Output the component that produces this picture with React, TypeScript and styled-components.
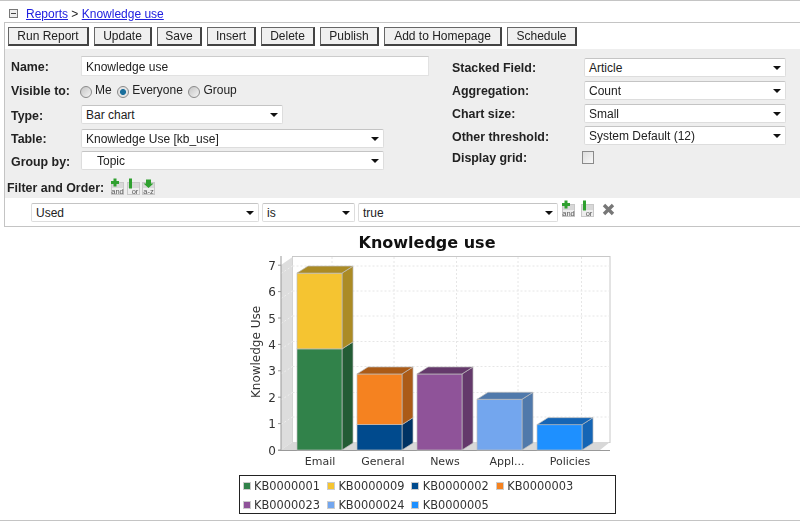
import React from "react";
import styled, { createGlobalStyle } from "styled-components";

const Global = createGlobalStyle`
  html, body { margin: 0; padding: 0; background: #fff; }
  body { font-family: "Liberation Sans", Arial, sans-serif; font-size: 12px; color: #222; }
`;

const Page = styled.div`
  width: 800px;
  height: 521px;
  box-sizing: border-box;
  border-top: 1px solid #c4c4c4;
  border-bottom: 1px solid #c4c4c4;
  overflow: hidden;
  display: flex;
  flex-direction: column;
  filter: blur(0.3px);
`;
const Crumbs = styled.div`
  height: 21px;
  flex: none;
  box-sizing: border-box;
  padding: 4px 0 0 9px;
  display: flex;
  align-items: center;
  gap: 8px;
  font-size: 12px;
  line-height: 14px;
`;
const Collapse = styled.span`
  width: 9px;
  height: 9px;
  box-sizing: border-box;
  border: 1px solid #777;
  background: linear-gradient(#444, #444) center / 5px 1px no-repeat, #eee;
  flex: none;
`;
const CrumbLink = styled.a`
  color: #2020e0;
  text-decoration: underline;
`;
const Panel = styled.div`
  margin-left: 4px;
  height: 205px;
  flex: none;
  box-sizing: border-box;
  border-left: 1px solid #c4c4c4;
  border-top: 1px solid #c4c4c4;
  border-bottom: 1px solid #c4c4c4;
  display: flex;
  flex-direction: column;
`;
const Toolbar = styled.div`
  height: 26px;
  flex: none;
  box-sizing: border-box;
  padding: 4px 0 0 3px;
  display: flex;
  gap: 5px;
`;
const Btn = styled.button<{ $w: number }>`
  width: ${(p) => p.$w}px;
  height: 19px;
  padding: 0;
  box-sizing: border-box;
  border: 1px solid #444;
  border-right-width: 2px;
  border-bottom-width: 2px;
  border-left-color: #666;
  border-top-color: #666;
  background: #f0f0f0;
  color: #222;
  font: 12px "Liberation Sans", Arial, sans-serif;
`;
const Form = styled.div`
  height: 149px;
  flex: none;
  background: #eee;
  box-sizing: border-box;
  display: flex;
  flex-direction: column;
`;
const Columns = styled.div`
  display: flex;
  padding: 5px 0 0 6px;
`;
const Col = styled.div<{ $w: number; $top?: number }>`
  width: ${(p) => p.$w}px;
  margin-top: ${(p) => p.$top ?? 0}px;
  flex: none;
  display: flex;
  flex-direction: column;
`;
const Row = styled.div<{ $h: number; $label: number }>`
  height: ${(p) => p.$h}px;
  display: grid;
  grid-template-columns: ${(p) => p.$label}px 1fr;
  align-items: center;
`;
const Label = styled.label`
  font-weight: bold;
  font-size: 12.4px;
  padding-top: 2px;
  color: #222;
  white-space: nowrap;
`;
const TextInput = styled.div`
  height: 20px;
  width: 348px;
  box-sizing: border-box;
  background: #fff;
  border: 1px solid #e2e2e2;
  border-top-color: #ccc;
  padding: 0 4px;
  line-height: 20px;
  font-size: 12px;
`;
const Select = styled.div<{ $w: number; $indent?: number }>`
  position: relative;
  width: ${(p) => p.$w}px;
  height: 19px;
  box-sizing: border-box;
  background: #fff;
  border: 1px solid #ddd;
  border-top-color: #c4c4c4;
  border-radius: 2px;
  padding-left: ${(p) => p.$indent ?? 4}px;
  line-height: 18px;
  font-size: 12px;
  color: #222;
  &::after {
    content: "";
    position: absolute;
    right: 4px;
    top: 7px;
    border: 4px solid transparent;
    border-top: 4px solid #111;
    border-bottom: 0;
  }
`;
const Radios = styled.div`
  display: flex;
  align-items: center;
  margin-left: -1px;
`;
const Radio = styled.span<{ $on?: boolean }>`
  width: 12px;
  height: 12px;
  margin: 3px 3px 0 0;
  box-sizing: border-box;
  border-radius: 50%;
  border: 1px solid #8a8a8a;
  background: ${(p) =>
    p.$on ? "radial-gradient(circle, #1b6f9c 0 2.6px, #e4e4e4 3.4px)" : "linear-gradient(135deg, #c4c4c4, #f4f4f4)"};
  flex: none;
`;
const RadioText = styled.span`
  margin-right: 5.5px;
  margin-top: -1px;
  font-size: 12px;
`;
const Check = styled.span`
  width: 12px;
  height: 13px;
  margin-left: -2px;
  box-sizing: border-box;
  border: 1px solid #8a8a8a;
  background: linear-gradient(135deg, #ddd, #f8f8f8);
`;
const FilterHead = styled.div`
  margin: auto 0 3px 2px;
  display: flex;
  align-items: center;
  gap: 5px;
`;
const IconSet = styled.span`
  display: inline-flex;
  gap: 0.5px;
  margin-left: 1px;
`;
const FilterRow = styled.div`
  height: 28px;
  flex: 1;
  box-sizing: border-box;
  padding: 5px 0 0 26px;
  display: flex;
  align-items: flex-start;
  gap: 3px;
`;
const RowIcons = styled.div`
  display: flex;
  align-items: center;
  gap: 4px;
  margin-top: -3px;
`;
const DeleteWrap = styled.span`
  display: inline-flex;
  margin: 2px 0 0 2.5px;
`;
const ChartFigure = styled.div`
  margin-left: 227px;
  width: 400px;
  display: flex;
  flex-direction: column;
  align-items: center;
`;
const ChartTitle = styled.div`
  font-family: "DejaVu Sans", sans-serif;
  font-weight: bold;
  font-size: 16px;
  line-height: 20px;
  margin-top: 6px;
  color: #111;
`;
const Plot = styled.svg`
  display: block;
  margin-top: -3px;
  flex: none;
`;
const Legend = styled.div`
  width: 377px;
  height: 39px;
  box-sizing: border-box;
  border: 1px solid #222;
  padding: 0 0 0 3px;
  display: grid;
  grid-template-columns: repeat(4, 84.4px);
  grid-auto-rows: 19px;
  align-items: center;
  font-family: "DejaVu Sans", sans-serif;
  font-size: 11.4px;
  color: #333;
`;
const LegendItem = styled.div`
  display: flex;
  align-items: center;
  gap: 3.5px;
  white-space: nowrap;
`;
const Swatch = styled.span<{ $c: string }>`
  width: 8px;
  height: 8px;
  box-sizing: border-box;
  background: ${(p) => p.$c};
  border: 1px solid #ccc;
  flex: none;
`;

const AddIcon = ({ kind }: { kind: "and" | "or" | "az" }) => (
  <svg width="15" height="17" viewBox="0 0 15 17">
    <rect x="1.5" y="4.5" width="12" height="12" fill="#d8d8d8" stroke="#c8c8c8" />
    <rect x="2" y="10" width="11" height="6" fill="#eee" />
    {kind === "and" && <path d="M5 0.5v8M1 4.5h8" stroke="#2fa02f" strokeWidth="3" />}
    {kind === "or" && <rect x="3" y="0.5" width="3" height="10" fill="#2fa02f" />}
    {kind === "az" && <path d="M7.5 10 2.5 5.5h2.5V1.5h5v4h2.5z" fill="#2fa02f" />}
    <text
      x={kind === "or" ? 9 : 7.5}
      y="15.5"
      textAnchor="middle"
      fontSize="7.5"
      fontFamily="Liberation Sans"
      fill="#555"
    >
      {kind === "az" ? "a-z" : kind}
    </text>
  </svg>
);

const DeleteIcon = () => (
  <svg width="13" height="13" viewBox="0 0 13 13">
    <path d="M2 2l9 9M11 2l-9 9" stroke="#777" strokeWidth="3.4" />
  </svg>
);

type Seg = { from: number; to: number; face: string; dark: string };
type Bar = { x: number; labelX: number; label: string; segs: Seg[] };

const X0 = 281;
const BASE = 200;
const UNIT = 26.4;
const DX = 11;
const DY = 7;
const W = 45;
const OX = 227;
const OY = 250;

const bars: Bar[] = [
  { x: 297, labelX: 320, label: "Email", segs: [
    { from: 0, to: 3.83, face: "#31824a", dark: "#235c35" },
    { from: 3.83, to: 6.7, face: "#f5c431", dark: "#ab8b25" },
  ] },
  { x: 357, labelX: 383, label: "General", segs: [
    { from: 0, to: 0.96, face: "#004a8d", dark: "#003364" },
    { from: 0.96, to: 2.88, face: "#f58220", dark: "#ab5b17" },
  ] },
  { x: 417, labelX: 445, label: "News", segs: [{ from: 0, to: 2.88, face: "#8f5399", dark: "#64396b" }] },
  { x: 477, labelX: 507, label: "Appl...", segs: [{ from: 0, to: 1.92, face: "#73a6ee", dark: "#5079ab" }] },
  { x: 537, labelX: 570, label: "Policies", segs: [{ from: 0, to: 0.96, face: "#1e90ff", dark: "#1565b5" }] },
];

const gridY = [266, 291, 316, 341.5, 366.5, 392.5, 417];
const gridX = [332, 394, 456.5, 518, 581.5];

const Chart = () => {
  const sx = (x: number) => x - OX;
  const sy = (v: number) => BASE - v * UNIT;
  return (
    <Plot width="400" height="225" viewBox="0 0 400 225">
      <rect x={sx(292.5)} y="6.5" width="317.5" height="186" fill="#fff" stroke="#c8c8c8" />
      <polygon points={`${sx(X0)},15 ${sx(292.5)},7 ${sx(292.5)},192 ${sx(X0)},200`} fill="#ddd" />
      <polygon points={`${sx(X0)},200 ${sx(292.5)},192 ${sx(610)},192 ${sx(600)},200`} fill="#d8d8d8" />
      {gridY.map((y) => (
        <g key={y} stroke="#e6e6e6" strokeDasharray="2 2">
          <line x1={sx(292.5)} x2={sx(610)} y1={y - OY} y2={y - OY} />
          <line x1={sx(X0)} x2={sx(292.5)} y1={y - OY + 7.5} y2={y - OY} stroke="#eee" />
        </g>
      ))}
      {gridX.map((x) => (
        <line key={x} x1={sx(x)} x2={sx(x)} y1="7" y2="192" stroke="#e6e6e6" strokeDasharray="2 2" />
      ))}
      <line x1={sx(X0)} x2={sx(X0)} y1="6" y2="200" stroke="#999" />
      <line x1={sx(X0) - 3} x2={sx(610)} y1="200.5" y2="200.5" stroke="#999" />
      {[0, 1, 2, 3, 4, 5, 6, 7].map((v) => (
        <g key={v}>
          <line x1={sx(X0) - 3} x2={sx(X0)} y1={sy(v)} y2={sy(v)} stroke="#999" />
          <text x={sx(X0) - 5} y={sy(v) + 4.5} textAnchor="end" fontSize="12" fontFamily="DejaVu Sans" fill="#333">
            {v}
          </text>
        </g>
      ))}
      <text
        transform={`translate(${sx(260)} 102) rotate(-90)`}
        textAnchor="middle"
        fontSize="12"
        fontFamily="DejaVu Sans"
        fill="#333"
      >
        Knowledge Use
      </text>
      {bars.map((b) => {
        const x = sx(b.x);
        const top = b.segs[b.segs.length - 1];
        return (
          <g key={b.label} stroke="#bdbdbd" strokeWidth="0.7">
            {b.segs.map((s) => (
              <g key={s.face}>
                <polygon
                  points={`${x + W},${sy(s.from)} ${x + W + DX},${sy(s.from) - DY} ${x + W + DX},${sy(s.to) - DY} ${x + W},${sy(s.to)}`}
                  fill={s.dark}
                />
                <rect x={x} y={sy(s.to)} width={W} height={(s.to - s.from) * UNIT} fill={s.face} />
              </g>
            ))}
            <polygon
              points={`${x},${sy(top.to)} ${x + DX},${sy(top.to) - DY} ${x + W + DX},${sy(top.to) - DY} ${x + W},${sy(top.to)}`}
              fill={top.dark}
            />
            <text
              x={sx(b.labelX)}
              y="215"
              textAnchor="middle"
              fontSize="11"
              fontFamily="DejaVu Sans"
              fill="#333"
              stroke="none"
            >
              {b.label}
            </text>
          </g>
        );
      })}
    </Plot>
  );
};

const buttons: [string, number][] = [
  ["Run Report", 81], ["Update", 58], ["Save", 45], ["Insert", 49], ["Delete", 54],
  ["Publish", 59], ["Add to Homepage", 118], ["Schedule", 70],
];

const legend: [string, string][] = [
  ["KB0000001", "#31824a"], ["KB0000009", "#f5c431"], ["KB0000002", "#004a8d"], ["KB0000003", "#f58220"],
  ["KB0000023", "#8f5399"], ["KB0000024", "#73a6ee"], ["KB0000005", "#1e90ff"],
];

export default function App() {
  return (
    <>
      <Global />
      <Page>
        <Crumbs>
          <Collapse />
          <span>
            <CrumbLink>Reports</CrumbLink> &gt; <CrumbLink>Knowledge use</CrumbLink>
          </span>
        </Crumbs>
        <Panel>
          <Toolbar>
            {buttons.map(([t, w]) => (
              <Btn key={t} $w={w}>{t}</Btn>
            ))}
          </Toolbar>
          <Form>
            <Columns>
              <Col $w={441}>
                <Row $h={24} $label={70}>
                  <Label>Name:</Label>
                  <TextInput>Knowledge use</TextInput>
                </Row>
                <Row $h={24} $label={70}>
                  <Label>Visible to:</Label>
                  <Radios>
                    <Radio /><RadioText>Me</RadioText>
                    <Radio $on /><RadioText>Everyone</RadioText>
                    <Radio /><RadioText>Group</RadioText>
                  </Radios>
                </Row>
                <Row $h={25} $label={70}>
                  <Label>Type:</Label>
                  <Select $w={202}>Bar chart</Select>
                </Row>
                <Row $h={22} $label={70}>
                  <Label>Table:</Label>
                  <Select $w={303}>Knowledge Use [kb_use]</Select>
                </Row>
                <Row $h={23} $label={70}>
                  <Label>Group by:</Label>
                  <Select $w={303} $indent={15}>Topic</Select>
                </Row>
              </Col>
              <Col $w={340} $top={1.5}>
                <Row $h={23} $label={132}>
                  <Label>Stacked Field:</Label>
                  <Select $w={202}>Article</Select>
                </Row>
                <Row $h={23} $label={132}>
                  <Label>Aggregation:</Label>
                  <Select $w={202}>Count</Select>
                </Row>
                <Row $h={23} $label={132}>
                  <Label>Chart size:</Label>
                  <Select $w={202}>Small</Select>
                </Row>
                <Row $h={22} $label={132}>
                  <Label>Other threshold:</Label>
                  <Select $w={202}>System Default (12)</Select>
                </Row>
                <Row $h={21} $label={132}>
                  <Label>Display grid:</Label>
                  <Check />
                </Row>
              </Col>
            </Columns>
            <FilterHead>
              <Label>Filter and Order:</Label>
              <IconSet>
                <AddIcon kind="and" />
                <AddIcon kind="or" />
                <AddIcon kind="az" />
              </IconSet>
            </FilterHead>
          </Form>
          <FilterRow>
            <Select $w={228}>Used</Select>
            <Select $w={93}>is</Select>
            <Select $w={200}>true</Select>
            <RowIcons>
              <AddIcon kind="and" />
              <AddIcon kind="or" />
              <DeleteWrap><DeleteIcon /></DeleteWrap>
            </RowIcons>
          </FilterRow>
        </Panel>
        <ChartFigure>
          <ChartTitle>Knowledge use</ChartTitle>
          <Chart />
          <Legend>
            {legend.map(([t, c]) => (
              <LegendItem key={t}>
                <Swatch $c={c} />
                {t}
              </LegendItem>
            ))}
          </Legend>
        </ChartFigure>
      </Page>
    </>
  );
}
